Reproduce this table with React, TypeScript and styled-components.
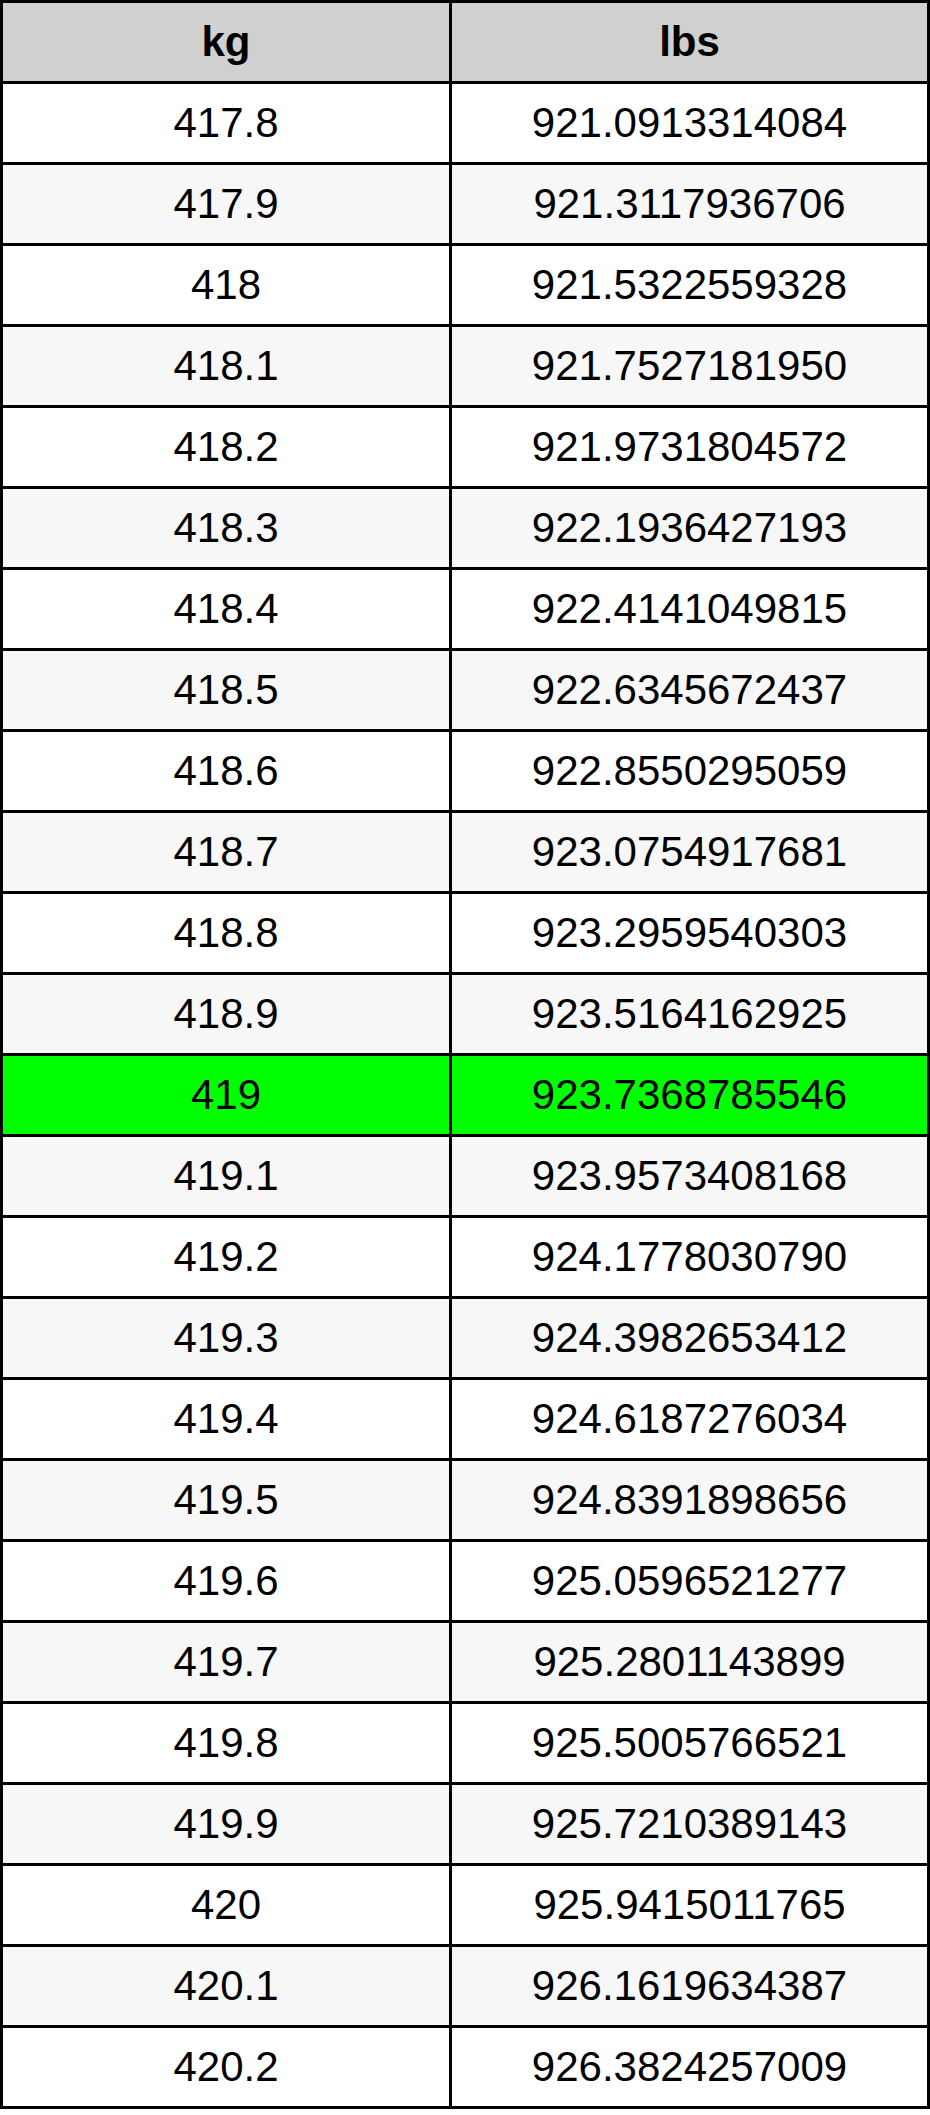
import React from "react";
import styled, { createGlobalStyle } from "styled-components";

const GlobalStyle = createGlobalStyle`
  html, body {
    margin: 0;
    padding: 0;
    background: #ffffff;
  }
  body {
    font-family: "Liberation Sans", Arial, sans-serif;
  }
`;

const Table = styled.div`
  display: grid;
  grid-template-columns: 446px 475px;
  grid-auto-rows: 78px;
  gap: 3px;
  padding: 3px;
  width: 930px;
  box-sizing: border-box;
  background: #000000;
`;

type Tone = "head" | "plain" | "alt" | "hit";

const toneColor: Record<Tone, string> = {
  head: "#d0d0d0",
  plain: "#ffffff",
  alt: "#f7f7f7",
  hit: "#00ff00",
};

const Cell = styled.div<{ $tone: Tone }>`
  display: flex;
  align-items: center;
  justify-content: center;
  background: ${(p) => toneColor[p.$tone]};
  color: #000000;
  font-family: "Liberation Sans", Arial, sans-serif;
  font-size: 42px;
  font-weight: ${(p) => (p.$tone === "head" ? 700 : 400)};
  line-height: 1;
`;

const rows: [string, string][] = [
  ["417.8", "921.0913314084"],
  ["417.9", "921.3117936706"],
  ["418", "921.5322559328"],
  ["418.1", "921.7527181950"],
  ["418.2", "921.9731804572"],
  ["418.3", "922.1936427193"],
  ["418.4", "922.4141049815"],
  ["418.5", "922.6345672437"],
  ["418.6", "922.8550295059"],
  ["418.7", "923.0754917681"],
  ["418.8", "923.2959540303"],
  ["418.9", "923.5164162925"],
  ["419", "923.7368785546"],
  ["419.1", "923.9573408168"],
  ["419.2", "924.1778030790"],
  ["419.3", "924.3982653412"],
  ["419.4", "924.6187276034"],
  ["419.5", "924.8391898656"],
  ["419.6", "925.0596521277"],
  ["419.7", "925.2801143899"],
  ["419.8", "925.5005766521"],
  ["419.9", "925.7210389143"],
  ["420", "925.9415011765"],
  ["420.1", "926.1619634387"],
  ["420.2", "926.3824257009"],
];

export default function App() {
  return (
    <>
      <GlobalStyle />
      <Table>
        <Cell $tone="head">kg</Cell>
        <Cell $tone="head">lbs</Cell>
        {rows.map(([kg, lbs], i) => {
          const tone: Tone = kg === "419" ? "hit" : i % 2 === 1 ? "alt" : "plain";
          return (
            <React.Fragment key={kg}>
              <Cell $tone={tone}>{kg}</Cell>
              <Cell $tone={tone}>{lbs}</Cell>
            </React.Fragment>
          );
        })}
      </Table>
    </>
  );
}
